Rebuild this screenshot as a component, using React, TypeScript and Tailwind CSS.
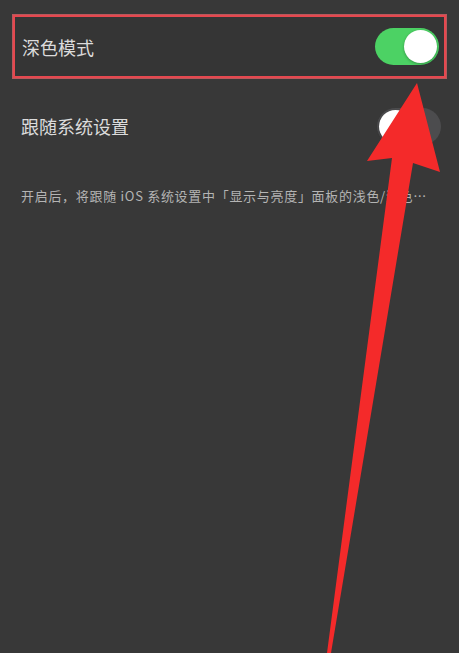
import React from "react"

function Toggle({ on }: { on: boolean }) {
    return (
        <div
            className={
                on
                    ? "w-[64px] h-[37px] rounded-full bg-[#4cd264] flex items-center justify-end pr-[2px]"
                    : "w-[64px] h-[37px] rounded-full bg-[#4c4c4e] flex items-center justify-start pl-[2px]"
            }
        >
            <div className="w-[33px] h-[33px] rounded-full bg-white shadow-[0_1px_3px_rgba(0,0,0,0.3)]" />
        </div>
    )
}

function Arrow() {
    return (
        <svg className="absolute inset-0 pointer-events-none" width="459" height="653" viewBox="0 0 459 653">
            <polygon
                points="417,83 440,172 413,163 331,653 327,653 392,158 367,161"
                fill="#f42a2a"
            />
        </svg>
    )
}

export default function App() {
    return (
        <div
            className="relative w-[459px] h-[653px] overflow-hidden bg-[#383838]"
            style={{ fontFamily: '"Noto Sans CJK SC", "Noto Sans", sans-serif' }}
        >
            <div className="flex flex-col px-[13px] pt-[15px]">
                <div className="h-[63px] flex items-center justify-between pl-[7px] pr-[5px] border-2 border-[#e5484f] outline outline-1 outline-[#b8585c] bg-[#353535]">
                    <span className="text-[18px] text-[#dcdcdc] leading-none">深色模式</span>
                    <Toggle on={true} />
                </div>
                <div className="h-[62px] mt-[17px] flex items-center justify-between pl-[8px] pr-[5px]">
                    <span className="text-[18px] text-[#dcdcdc] leading-none">跟随系统设置</span>
                    <Toggle on={false} />
                </div>
                <p className="mt-[30px] pl-[8px] text-[13px] leading-[18px] tracking-[0.7px] text-[#b4b4b4] whitespace-nowrap">
                    开启后，将跟随 iOS 系统设置中「显示与亮度」面板的浅色/深色…
                </p>
            </div>
            <Arrow />
        </div>
    )
}
